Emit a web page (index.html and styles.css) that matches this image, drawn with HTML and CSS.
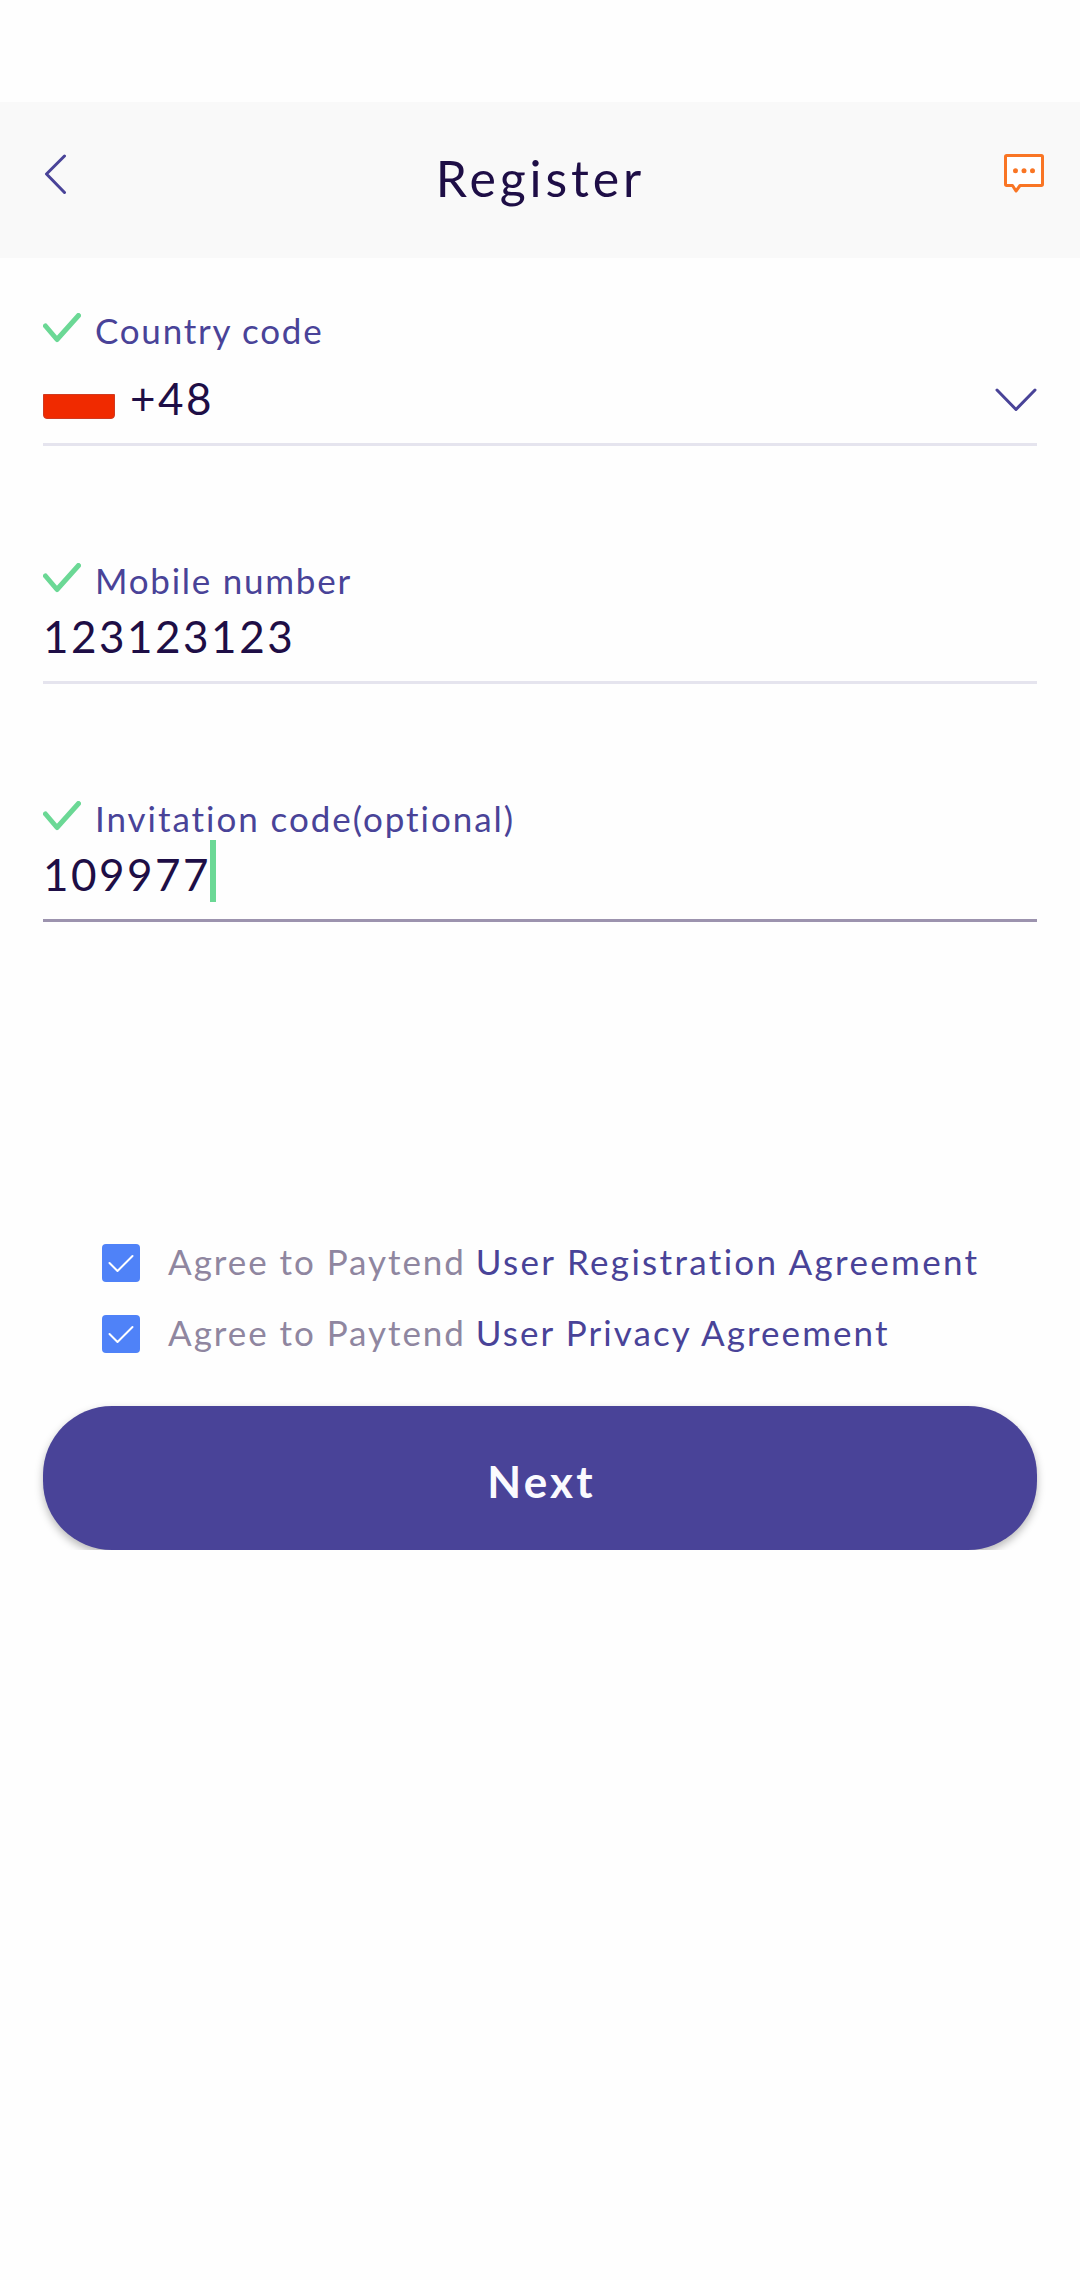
FILE: index.html
```html
<!DOCTYPE html>
<html lang="en">
<head>
<meta charset="utf-8">
<title>Register</title>
<link rel="stylesheet" href="styles.css">
</head>
<body>
<header class="header">
  <svg class="back" width="24" height="42" viewBox="0 0 24 42"><path d="M20.500 2 2.500 20l18 18.500"/></svg>
  <h1 class="title">Register</h1>
  <svg class="chat" width="40" height="40" viewBox="0 0 40 40"><path d="M2.700 1.500h34.600q1.200 0 1.200 1.200v27.600q0 1.200-1.200 1.200H16L12 37 8.500 31.500H2.700q-1.200 0-1.200-1.200V2.700q0-1.200 1.200-1.200z"/><circle cx="11.500" cy="16.700" r="2.500"/><circle cx="20" cy="16.700" r="2.500"/><circle cx="28.500" cy="16.700" r="2.500"/></svg>
</header>
<main class="form">
  <section class="field field-country">
    <div class="label"><svg class="tick" width="38" height="30" viewBox="0 0 38 30"><path d="M2.500 13 14 26.500 35.500 2.500"/></svg><span>Country code</span></div>
    <div class="value"><i class="flag"></i><span class="code">+48</span><svg class="chevron" width="42" height="24" viewBox="0 0 42 24"><path d="M2 2 21 21.500 40 2"/></svg></div>
  </section>
  <section class="field">
    <div class="label"><svg class="tick" width="38" height="30" viewBox="0 0 38 30"><path d="M2.500 13 14 26.500 35.500 2.500"/></svg><span>Mobile number</span></div>
    <div class="value"><span>123123123</span></div>
  </section>
  <section class="field field-active">
    <div class="label label-long"><svg class="tick" width="38" height="30" viewBox="0 0 38 30"><path d="M2.500 13 14 26.500 35.500 2.500"/></svg><span>Invitation code(optional)</span></div>
    <div class="value"><span>109977</span><i class="caret"></i></div>
  </section>
  <section class="agreements">
    <div class="agree"><span class="box"><svg width="26" height="19" viewBox="0 0 26 19"><path d="M1.500 9 9.500 17 24.500 2"/></svg></span><p>Agree to Paytend <a class="link">User Registration Agreement</a></p></div>
    <div class="agree"><span class="box"><svg width="26" height="19" viewBox="0 0 26 19"><path d="M1.500 9 9.500 17 24.500 2"/></svg></span><p>Agree to Paytend <a class="link link-privacy">User Privacy Agreement</a></p></div>
  </section>
  <button class="next">Next</button>
</main>
</body>
</html>
```
FILE: styles.css
```css
* { box-sizing: border-box; }
body {
  margin: 0;
  padding-top: 102px;
  min-height: 2280px;
  background: #fefefe;
  color: #1e0e46;
  font-family: Lato, "Open Sans", sans-serif;
  font-variant-ligatures: none;
}
svg { display: block; flex: none; fill: none; stroke-linecap: round; stroke-linejoin: round; }
.header {
  display: flex;
  align-items: flex-start;
  justify-content: space-between;
  height: 156px;
  padding: 52px 36px 0 44px;
  background: #f9f9f9;
}
.title {
  margin: -6px 0 0 9px;
  font-size: 50px;
  line-height: 60px;
  font-weight: 400;
  letter-spacing: 3.900px;
}
.back { stroke: #494398; stroke-width: 3; }
.chat { stroke: #f97524; stroke-width: 3; }
.chat path { fill: #fff; }
.chat circle { fill: #f97524; stroke: none; }
.form { padding: 51px 43px 0; }
.field {
  display: flex;
  flex-direction: column;
  gap: 5px;
  padding-bottom: 15px;
  margin-bottom: 113px;
  border-bottom: 3px solid #e5e4ee;
}
.field-country { gap: 17px; }
.field-active { margin-bottom: 0; border-color: #9c93ae; }
.label {
  display: flex;
  gap: 14px;
  height: 42px;
  color: #494398;
  font-size: 35px;
  line-height: 42px;
  letter-spacing: 1.750px;
}
.label-long { letter-spacing: 1.950px; }
.tick { margin-top: 4px; stroke: #6bd895; stroke-width: 5; }
.value {
  display: flex;
  height: 60px;
  font-size: 44px;
  line-height: 60px;
  letter-spacing: 2.500px;
}
.flag {
  width: 72px;
  height: 25px;
  margin: 26px 15px 0 0;
  background: #f02a00;
  border: 1px solid #d03a20;
  border-radius: 0 0 4px 4px;
}
.code { flex: 1; }
.chevron { margin-top: 20px; stroke: #494398; stroke-width: 3; }
.caret { width: 6px; height: 62px; margin: -4px 0 0 -1px; background: #6bd895; }
.agreements {
  display: flex;
  flex-direction: column;
  gap: 33px;
  padding: 322px 0 53px 59px;
}
.agree { display: flex; gap: 28px; height: 38px; }
.agree p {
  margin: -5px 0 0;
  color: #8f86a0;
  font-size: 35px;
  line-height: 44px;
  letter-spacing: 1.950px;
  white-space: nowrap;
}
.link { margin-left: -1px; color: #494398; letter-spacing: 2.330px; }
.link-privacy { letter-spacing: 2.080px; }
.box {
  display: grid;
  place-items: center;
  width: 38px;
  height: 38px;
  border-radius: 4px;
  background: #4f82f8;
  stroke: #fff;
  stroke-width: 2;
}
.next {
  display: block;
  width: 100%;
  height: 144px;
  padding: 5px 0 0 3px;
  border: 0;
  border-radius: 69px;
  background: #494398;
  color: #fafafe;
  font: 700 44px/60px Lato, sans-serif;
  letter-spacing: 3.200px;
  box-shadow: 0 4px 8px rgba(0, 0, 0, .28);
  clip-path: inset(-10px -20px 0);
}
```
